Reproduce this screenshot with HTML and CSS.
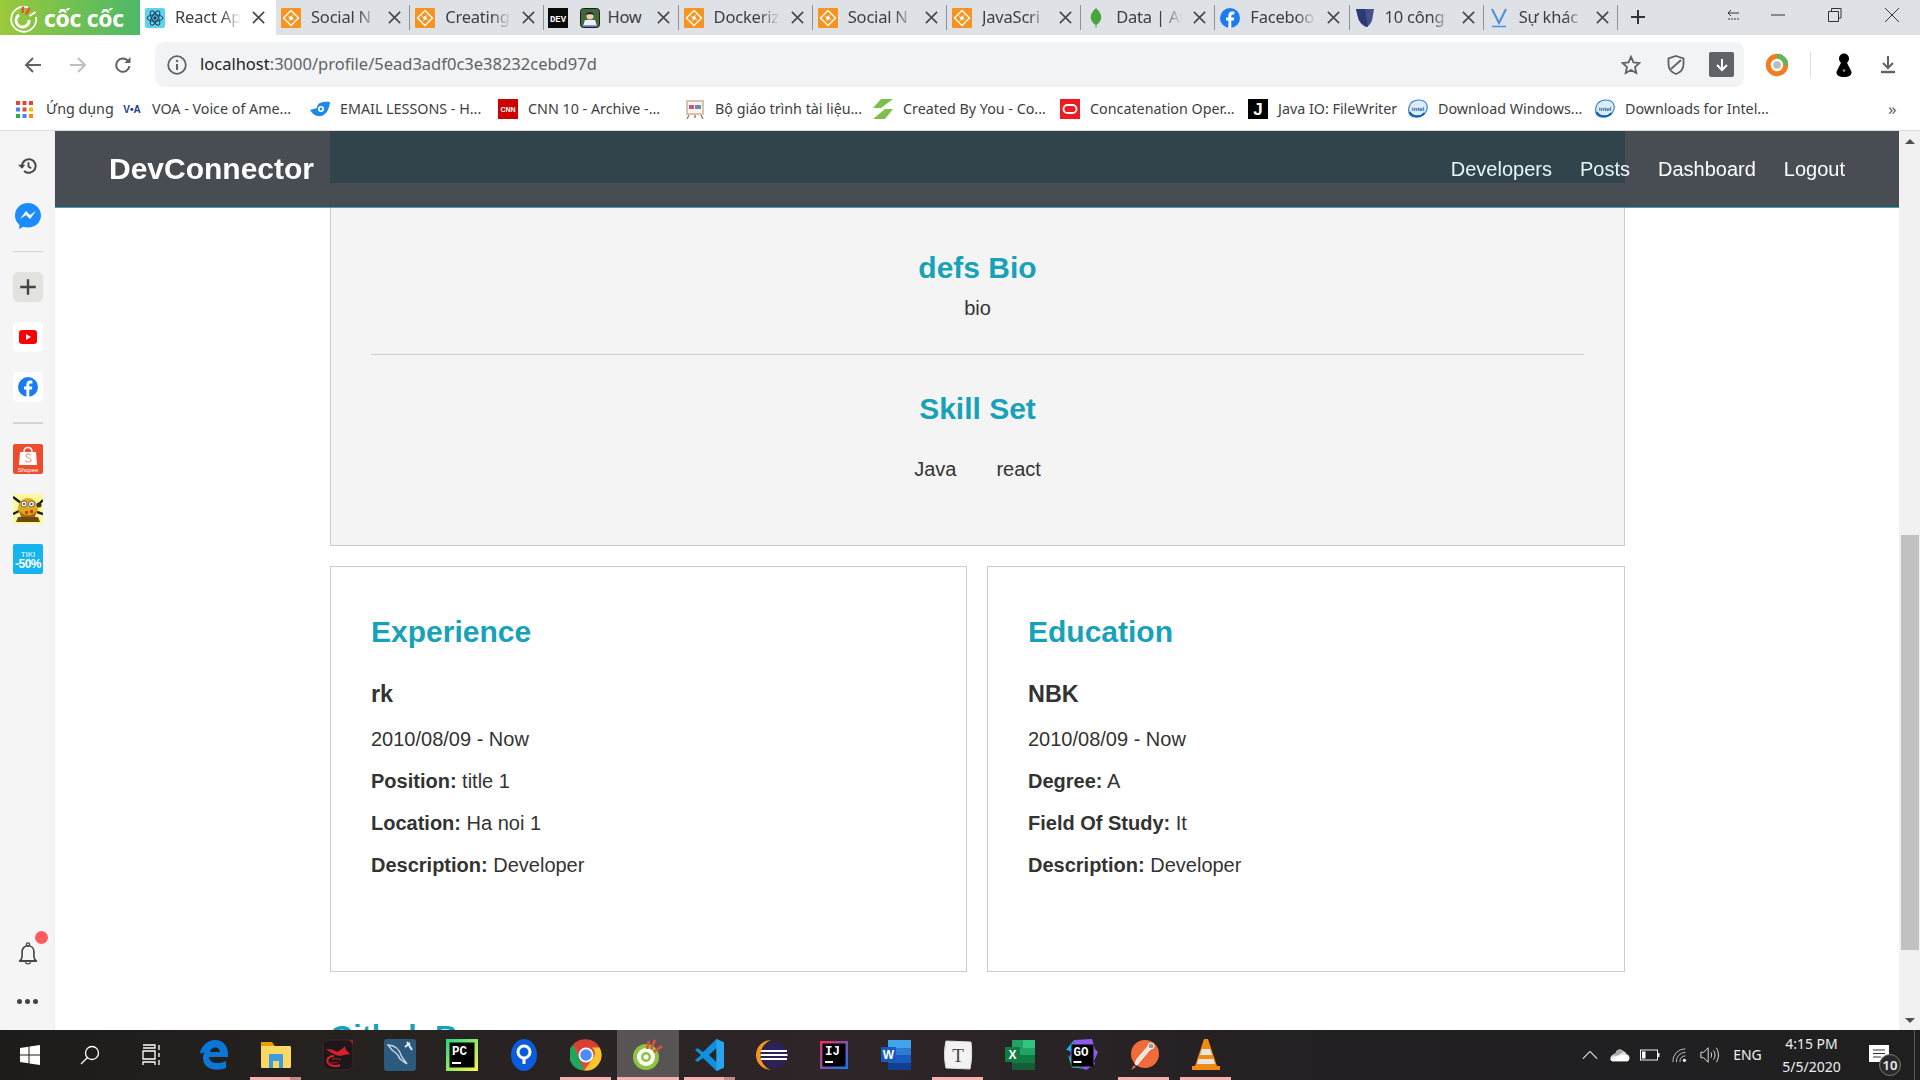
FILE: index.html
```html
<!DOCTYPE html>
<html lang="vi">
<head>
<meta charset="utf-8">
<title>React App</title>
<link rel="stylesheet" href="styles.css">
</head>
<body>
<svg class="defs" aria-hidden="true">
  <symbol id="orange" viewBox="0 0 20 20"><rect width="20" height="20" rx="1" fill="#f7931e"/><path d="M10 1.500 18.500 10 10 18.500 1.500 10Z" fill="#fff"/><path d="M10 3.500 13 6.500 8.500 9 6.500 7ZM16.500 10 13.500 13 11 8.500 13 6.500ZM10 16.500 7 13.500 11.500 11 13.500 13ZM3.500 10 6.500 7 9 11.500 7 13.500Z" fill="#f7931e"/><path d="M8.500 9 11 8.500 11.500 11 9 11.500Z" fill="#fff"/></symbol>
  <symbol id="react" viewBox="0 0 20 20"><rect width="20" height="20" rx="2" fill="#5fd3ee"/><g fill="none" stroke="#1c3b57" stroke-width="1"><ellipse cx="10" cy="10" rx="8" ry="3.200"/><ellipse cx="10" cy="10" rx="8" ry="3.200" transform="rotate(60 10 10)"/><ellipse cx="10" cy="10" rx="8" ry="3.200" transform="rotate(120 10 10)"/></g><circle cx="10" cy="10" r="1.700" fill="#1c3b57"/></symbol>
  <symbol id="close" viewBox="0 0 16 16"><path d="M2 2 14 14M14 2 2 14" stroke="#45484c" stroke-width="1.700" fill="none"/></symbol>
  <symbol id="fb" viewBox="0 0 20 20"><circle cx="10" cy="10" r="10" fill="#1a7cf2"/><path d="M11.300 20v-7.500h2.500l.5-3h-3V8c0-1 .4-1.600 1.700-1.600h1.400V3.800c-.6-.1-1.400-.2-2.200-.2-2.400 0-3.800 1.400-3.800 3.900v2H6v3h2.400V20Z" fill="#fff"/></symbol>
  <symbol id="intel" viewBox="0 0 20 20"><path d="M3 4C7 0 15 0 18 4c2.500 4 1 9-3 12-4 3-10 3-13 0C0 13 0 8 3 4Z" fill="#dcecf8" stroke="#3b86cc" stroke-width="1.200"/><path d="M1.500 13c3 5 11 6 15 1" fill="none" stroke="#0f5fa8" stroke-width="2"/><text x="10" y="11.500" class="fav-intel">intel</text></symbol>
</svg>

<div class="tabstrip">
  <div class="brand">
    <svg class="brand-mark" viewBox="0 0 30 30"><path d="M19 4.500A12.500 12.500 0 1 0 27 14" fill="none" stroke="#fff" stroke-width="1.800"/><path d="M10 12a6.500 6.500 0 1 0 10 5" fill="none" stroke="#fff" stroke-width="3"/><path d="M14 3.500 13.500 10" stroke="#e94f35" stroke-width="2.400"/><path d="M20.500 5 17 11.500" stroke="#e94f35" stroke-width="2.600"/><path d="M26.500 9 20.500 13" stroke="#fff" stroke-width="2"/></svg>
    <span class="brand-name">cốc cốc</span>
  </div>
  <div class="tab tab-active"><svg class="fav"><use href="#react"/></svg><span class="tab-title">React Ap</span><svg class="tab-x"><use href="#close"/></svg></div>
  <div class="tab"><svg class="fav"><use href="#orange"/></svg><span class="tab-title">Social N</span><svg class="tab-x"><use href="#close"/></svg></div>
  <div class="tab"><svg class="fav"><use href="#orange"/></svg><span class="tab-title">Creating</span><svg class="tab-x"><use href="#close"/></svg></div>
  <div class="tab tab-dev">
    <svg class="fav" viewBox="0 0 20 20"><rect width="20" height="20" fill="#0a0a0a"/><text x="10" y="14" class="fav-dev">DEV</text></svg>
    <svg class="fav fav-second" viewBox="0 0 20 20"><rect x=".5" y=".5" width="19" height="19" rx="3" fill="#3f6b3a" stroke="#1d1d1d"/><circle cx="10" cy="8" r="3.500" fill="#f0d0c0"/><path d="M6 7c0-4 8-4 8 0-2-1-6-1-8 0Z" fill="#222"/><path d="M3 18l2-6h10l2 6Z" fill="#eef2f6"/><path d="M3 18h14" stroke="#7a6fd0" stroke-width="1.500"/></svg>
    <span class="tab-title tab-title-short">How</span><svg class="tab-x"><use href="#close"/></svg>
  </div>
  <div class="tab"><svg class="fav"><use href="#orange"/></svg><span class="tab-title">Dockeriz</span><svg class="tab-x"><use href="#close"/></svg></div>
  <div class="tab"><svg class="fav"><use href="#orange"/></svg><span class="tab-title">Social N</span><svg class="tab-x"><use href="#close"/></svg></div>
  <div class="tab"><svg class="fav"><use href="#orange"/></svg><span class="tab-title">JavaScri</span><svg class="tab-x"><use href="#close"/></svg></div>
  <div class="tab"><svg class="fav" viewBox="0 0 20 20"><path d="M10 0c4 4 6 7 5 11-.6 3-3 5-4.500 6l-.2 3h-.6l-.2-3C8 16 5.600 14 5 11 4 7 6 4 10 0Z" fill="#4aa53f"/></svg><span class="tab-title">Data | At</span><svg class="tab-x"><use href="#close"/></svg></div>
  <div class="tab"><svg class="fav"><use href="#fb"/></svg><span class="tab-title">Faceboo</span><svg class="tab-x"><use href="#close"/></svg></div>
  <div class="tab"><svg class="fav" viewBox="0 0 20 20"><path d="M1 1h18l-1.500 9c-.8 5-3.500 8-6.500 9C7 17 4 14 3 9Z" fill="#46508a"/><path d="M1 1h9l3 18C8 17 4 14 3 9Z" fill="#2e3a75"/></svg><span class="tab-title">10 công</span><svg class="tab-x"><use href="#close"/></svg></div>
  <div class="tab"><svg class="fav" viewBox="0 0 20 20"><path d="M3 1 10 15 17 1" fill="none" stroke="#4a90e2" stroke-width="2"/><path d="M3 18.500h14" stroke="#4a90e2" stroke-width="1.500"/></svg><span class="tab-title">Sự khác</span><svg class="tab-x"><use href="#close"/></svg></div>
  <div class="newtab"><svg class="newtab-ico" viewBox="0 0 16 16"><path d="M8 1v14M1 8h14" stroke="#333" stroke-width="2"/></svg></div>
  <div class="win-controls">
    <div class="win-btn win-sync"><svg class="win-ico" viewBox="0 0 14 14"><path d="M1 5h11M1 5l3-3M1 5l3 3" stroke="#333" fill="none"/><path d="M1 11h12" stroke="#333" stroke-dasharray="2 1"/></svg></div>
    <div class="win-btn"><svg class="win-ico" viewBox="0 0 14 14"><path d="M0 7h14" stroke="#333"/></svg></div>
    <div class="win-btn"><svg class="win-ico" viewBox="0 0 14 14"><path d="M3.500 3V.5h9.500v9.500h-2.500M.5 3.500h10v10H.5Z" stroke="#333" fill="none"/></svg></div>
    <div class="win-btn win-close"><svg class="win-ico" viewBox="0 0 14 14"><path d="M0 0 14 14M14 0 0 14" stroke="#333" fill="none"/></svg></div>
  </div>
</div>

<div class="toolbar">
  <div class="tool"><svg class="tool-ico" viewBox="0 0 18 18"><path d="M17 9H3M9 2 2 9l7 7" fill="none" stroke="#5f6368" stroke-width="2"/></svg></div>
  <div class="tool"><svg class="tool-ico" viewBox="0 0 18 18"><path d="M1 9h14M9 2l7 7-7 7" fill="none" stroke="#bcbfc4" stroke-width="2"/></svg></div>
  <div class="tool"><svg class="tool-ico" viewBox="0 0 18 18"><path d="M15.500 10a6.700 6.700 0 1 1-1.800-5.500" fill="none" stroke="#5f6368" stroke-width="2"/><path d="M16.500 1v6h-6Z" fill="#5f6368"/></svg></div>
  <div class="omnibox">
    <svg class="omni-info" viewBox="0 0 20 20"><circle cx="10" cy="10" r="8.800" fill="none" stroke="#5f6368" stroke-width="1.800"/><path d="M10 9v6" stroke="#5f6368" stroke-width="2"/><circle cx="10" cy="6" r="1.200" fill="#5f6368"/></svg>
    <div class="url"><span class="url-host">localhost</span>:3000/profile/5ead3adf0c3e38232cebd97d</div>
    <svg class="omni-ico" viewBox="0 0 20 20"><path d="M10 1.800 12.500 7.400l6 .6-4.500 4 1.300 6L10 15l-5.300 3 1.300-6-4.500-4 6-.6Z" fill="none" stroke="#5f6368" stroke-width="1.800"/></svg>
    <svg class="omni-ico omni-ico-last" viewBox="0 0 20 20"><path d="M10 1 17.500 3.500V9c0 5-3.500 8.500-7.500 10C6 17.500 2.500 14 2.500 9V3.500Z" fill="none" stroke="#5f6368" stroke-width="1.800"/><path d="M5 14 15 5" stroke="#5f6368" stroke-width="1.800"/></svg>
    <div class="omni-dl"><svg class="omni-dl-ico" viewBox="0 0 14 14"><path d="M7 1v11M2 7l5 5 5-5" fill="none" stroke="#fff" stroke-width="2"/></svg></div>
  </div>
  <div class="tool tool-ext"><svg class="tool-ico tool-ico-lg" viewBox="0 0 22 22"><circle cx="11" cy="11" r="8" fill="none" stroke="#f47c20" stroke-width="4.500"/><path d="M11 3a8 8 0 0 1 8 8" fill="none" stroke="#5cb85c" stroke-width="4.500"/><circle cx="11" cy="11" r="3.500" fill="#bbb"/></svg></div>
  <div class="tool-sep"></div>
  <div class="tool"><svg class="tool-ico tool-ico-lg" viewBox="0 0 22 26"><circle cx="11" cy="6" r="5.500" fill="#000"/><path d="M8 10h6l5 10c1 4-3 6-8 6s-9-2-8-6Z" fill="#000"/><circle cx="11" cy="19" r="1.500" fill="#888"/></svg></div>
  <div class="tool tool-last"><svg class="tool-ico" viewBox="0 0 18 18"><path d="M9 0v11M4 7l5 5 5-5" fill="none" stroke="#5f6368" stroke-width="2"/><path d="M2 16h14" stroke="#5f6368" stroke-width="2.400"/></svg></div>
</div>

<div class="bookmarks">
  <div class="bm"><svg class="bm-apps" viewBox="0 0 17 17"><g fill="#ea4335"><rect width="4" height="4"/><rect x="6.500" width="4" height="4"/><rect x="13" width="4" height="4"/></g><g><rect y="6.500" width="4" height="4" fill="#4285f4"/><rect x="6.500" y="6.500" width="4" height="4" fill="#ea4335"/><rect x="13" y="6.500" width="4" height="4" fill="#fbbc05"/><rect y="13" width="4" height="4" fill="#34a853"/><rect x="6.500" y="13" width="4" height="4" fill="#4285f4"/><rect x="13" y="13" width="4" height="4" fill="#fb8c00"/></g></svg><span class="bm-text">Ứng dụng</span></div>
  <div class="bm"><svg class="fav" viewBox="0 0 20 20"><text x="10" y="13.500" class="fav-voa">V•A</text></svg><span class="bm-text">VOA - Voice of Ame...</span></div>
  <div class="bm"><svg class="fav" viewBox="0 0 20 20"><path d="M0 11 7 9C7 4 12 2 20 3c-1 10-6 15-12 14-3 0-6-3-8-6Z" fill="#1e88e5"/><circle cx="11" cy="10" r="3" fill="#fff"/><circle cx="11" cy="10" r="1.400" fill="#1e88e5"/></svg><span class="bm-text">EMAIL LESSONS - H...</span></div>
  <div class="bm"><svg class="fav" viewBox="0 0 20 20"><rect width="20" height="20" fill="#cc0000"/><text x="10" y="13" class="fav-cnn">CNN</text></svg><span class="bm-text">CNN 10 - Archive -...</span></div>
  <div class="bm"><svg class="fav" viewBox="0 0 20 20"><path d="M4 16 2 20M16 16l2 4M10 16v3" stroke="#a9825f" stroke-width="1.500"/><rect x="1" y="1" width="18" height="15" fill="#d8c4ac"/><rect x="3" y="3" width="14" height="11" fill="#f5f5f5"/><path d="M4 6h5v4H4Z" fill="#c9566a"/><path d="M10 6h6v4h-6Z" fill="#6f87b8"/></svg><span class="bm-text">Bộ giáo trình tài liệu...</span></div>
  <div class="bm"><svg class="fav" viewBox="0 0 20 20"><path d="M8 0h12L8 9H0ZM12 10h8L12 20H0Z" fill="#7cc04b"/></svg><span class="bm-text">Created By You - Co...</span></div>
  <div class="bm"><svg class="fav" viewBox="0 0 20 20"><rect width="20" height="20" fill="#ed1c24"/><rect x="3.500" y="6" width="13" height="8" rx="4" fill="none" stroke="#fff" stroke-width="1.800"/></svg><span class="bm-text">Concatenation Oper...</span></div>
  <div class="bm"><svg class="fav" viewBox="0 0 20 20"><rect width="20" height="20" fill="#000"/><text x="10" y="16" class="fav-j">J</text></svg><span class="bm-text">Java IO: FileWriter</span></div>
  <div class="bm"><svg class="fav"><use href="#intel"/></svg><span class="bm-text">Download Windows...</span></div>
  <div class="bm"><svg class="fav"><use href="#intel"/></svg><span class="bm-text">Downloads for Intel...</span></div>
  <div class="bm-more">»</div>
</div>

<div class="workspace">
  <aside class="sidebar">
    <div class="side-item"><svg class="side-ico" viewBox="0 0 22 22"><path d="M4.500 11a7.500 7.500 0 1 1 2.300 5.400" fill="none" stroke="#444" stroke-width="2.200"/><path d="M0 9.500h8L4.500 14Z" fill="#444"/><path d="M11.500 7v4.500l3 2" fill="none" stroke="#444" stroke-width="2"/></svg></div>
    <div class="side-item"><svg class="side-full" viewBox="0 0 30 30"><path d="M15 2C7.500 2 2 7.500 2 14.500c0 3.800 1.600 7 4.300 9.200V28l4-2.200c1.500.4 3 .7 4.700.7 7.500 0 13-5.500 13-12S22.500 2 15 2Z" fill="#1a8cff"/><path d="M7 18l6-8 4 4 6-4-6 8-4-4Z" fill="#fff"/></svg></div>
    <div class="side-rule"></div>
    <div class="side-item side-add"><svg class="side-ico" viewBox="0 0 18 18"><path d="M9 2v14M2 9h14" stroke="#444" stroke-width="2.200"/></svg></div>
    <div class="side-item side-tile"><svg class="side-yt" viewBox="0 0 18 14"><rect width="18" height="14" rx="3" fill="#f00"/><path d="M7 4v6l5-3Z" fill="#fff"/></svg></div>
    <div class="side-item side-tile"><svg class="side-ico"><use href="#fb"/></svg></div>
    <div class="side-rule side-rule-thick"></div>
    <div class="side-item"><svg class="side-full" viewBox="0 0 30 30"><rect width="30" height="30" rx="2" fill="#ee4d2d"/><path d="M7 8h16l1 13H6Z" fill="#fff"/><path d="M11 8c0-6 8-6 8 0" fill="none" stroke="#fff" stroke-width="1.500"/><path d="M18 11c-2-2-5-1-5 1s5 1.500 5 4-4 2.500-6 .5" fill="none" stroke="#f4a08e" stroke-width="1.300"/><text x="15" y="27.500" class="tile-shopee">Shopee</text></svg></div>
    <div class="side-item"><svg class="side-full" viewBox="0 0 30 30"><rect width="30" height="30" fill="#fdf7a0"/><path d="M0 3 8 9M30 6l-6 6M0 20l6-3M30 20l-6-2" stroke="#222" stroke-width="2.400"/><ellipse cx="15" cy="14" rx="10" ry="10" fill="#e0a816"/><path d="M6 16c4 7 14 7 18 0l-2 7H8Z" fill="#a56a10"/><circle cx="11" cy="10" r="3" fill="#eee" stroke="#555" stroke-width=".8"/><circle cx="18.500" cy="10" r="3" fill="#eee" stroke="#555" stroke-width=".8"/><circle cx="11" cy="10" r="1" fill="#333"/><circle cx="18.500" cy="10" r="1" fill="#333"/><path d="M3 28l2-5h20l2 5Z" fill="#6d4a12"/><path d="M12 17h3v3h-3ZM17 16h3v3h-3Z" fill="#c43a2b"/><circle cx="26" cy="11" r="2.500" fill="#333"/></svg></div>
    <div class="side-item"><svg class="side-full" viewBox="0 0 30 30"><rect width="30" height="30" rx="2" fill="#14b4ee"/><text x="15" y="12.500" class="tile-tiki">TIKI</text><text x="15" y="24" class="tile-off">-50%</text></svg></div>
    <div class="side-bottom">
      <div class="side-item side-bell"><svg class="side-ico" viewBox="0 0 22 26"><path d="M2 21c2-1 2.500-3 2.500-6V11c0-4 3-6.500 6.500-6.500S17.500 7 17.500 11v4c0 3 .5 5 2.500 6Z" fill="none" stroke="#444" stroke-width="1.800"/><circle cx="11" cy="3" r="1.800" fill="none" stroke="#444" stroke-width="1.400"/><path d="M8 22.500c1 2.500 5 2.500 6 0" fill="none" stroke="#444" stroke-width="1.500"/><path d="M1 21.300h20" stroke="#444" stroke-width="1.800"/></svg><span class="bell-dot"></span></div>
      <div class="side-item side-dots"><span class="dot"></span><span class="dot"></span><span class="dot"></span></div>
    </div>
  </aside>

  <main class="page">
    <nav class="navbar">
      <a class="logo">DevConnector</a>
      <ul class="nav-links">
        <li class="nav-item">Developers</li>
        <li class="nav-item">Posts</li>
        <li class="nav-item">Dashboard</li>
        <li class="nav-item">Logout</li>
      </ul>
    </nav>
    <div class="profile-grid">
      <div class="profile-top"></div>
      <section class="profile-about">
        <h2 class="text-primary">defs Bio</h2>
        <p class="about-text">bio</p>
        <div class="line"></div>
        <h2 class="text-primary">Skill Set</h2>
        <div class="skills">
          <div class="skill">Java</div>
          <div class="skill">react</div>
        </div>
      </section>
      <section class="profile-card">
        <h2 class="text-primary card-title">Experience</h2>
        <div class="entry">
          <h3 class="entry-name">rk</h3>
          <p class="entry-line">2010/08/09 - Now</p>
          <p class="entry-line"><strong>Position:</strong> title 1</p>
          <p class="entry-line"><strong>Location:</strong> Ha noi 1</p>
          <p class="entry-line"><strong>Description:</strong> Developer</p>
        </div>
      </section>
      <section class="profile-card">
        <h2 class="text-primary card-title">Education</h2>
        <div class="entry">
          <h3 class="entry-name">NBK</h3>
          <p class="entry-line">2010/08/09 - Now</p>
          <p class="entry-line"><strong>Degree:</strong> A</p>
          <p class="entry-line"><strong>Field Of Study:</strong> It</p>
          <p class="entry-line"><strong>Description:</strong> Developer</p>
        </div>
      </section>
      <section class="profile-github">
        <h2 class="text-primary github-title">Github Repos</h2>
      </section>
    </div>
  </main>

  <div class="scrollbar">
    <div class="sb-btn"><span class="sb-up"></span></div>
    <div class="sb-track"><div class="sb-thumb"></div></div>
    <div class="sb-btn"><span class="sb-down"></span></div>
  </div>
</div>

<footer class="taskbar">
  <div class="task-fixed">
    <div class="task"><svg class="task-sys" viewBox="0 0 20 20"><path d="M0 3 8.500 1.800V9.500H0ZM9.500 1.600 20 0V9.500H9.500ZM0 10.500H8.500V18.200L0 17ZM9.500 10.500H20V20L9.500 18.400Z" fill="#fff"/></svg></div>
    <div class="task"><svg class="task-sys" viewBox="0 0 20 20"><circle cx="12" cy="8" r="6.500" fill="none" stroke="#fff" stroke-width="1.300"/><path d="M7.500 12.500 1 19" stroke="#fff" stroke-width="1.300"/></svg></div>
    <div class="task"><svg class="task-sys" viewBox="0 0 20 20"><path d="M1 0h12v3H1M1 6h12v8H1ZM1 20v-3h12v3M17 0v5M17 8v4M17 15v5" fill="none" stroke="#fff" stroke-width="1.300"/></svg></div>
  </div>
  <div class="task-apps">
    <div class="task"><svg class="task-ico" viewBox="0 0 32 32"><path d="M2 14C4 5 11 1 17 1c8 0 13 6 13 14v3H11c0 6 9 8 17 4v7c-10 4-22 1-23-9-.3-3 .5-5 2-7-2 1-4 2-5 1Zm10-1h10c0-6-9-6-10 0Z" fill="#0b78d7"/></svg></div>
    <div class="task task-run task-stack"><svg class="task-ico" viewBox="0 0 32 32"><path d="M1 3h11l3 4h0V9H1Z" fill="#e0a000"/><rect x="1" y="7" width="30" height="22" rx="1" fill="#fbd862"/><path d="M9 15h14v14h-4v-7h-6v7H9Z" fill="#3d9be0"/></svg></div>
    <div class="task"><svg class="task-ico" viewBox="0 0 32 32"><rect x="1" y="1" width="30" height="30" rx="6" fill="#1d1719" stroke="#3a2a2c"/><path d="M27 1 31 5V1Z" fill="#a8151f"/><path d="M4 10c5 0 8 1 11 3l5-3 3-3 1 4 4 4-6 1-4 1c-3 0-9-3-14-7Z" fill="#d81f2c"/><path d="M12 17c-5 0-8 3-6 7 2 3 8 4 12 2" fill="none" stroke="#d81f2c" stroke-width="2"/><path d="M10 20c3-1 7 0 9 1M8 24c3 0 6 0 8-1" fill="none" stroke="#9f1720" stroke-width="1.300"/></svg></div>
    <div class="task"><svg class="task-ico" viewBox="0 0 32 32"><rect width="32" height="32" rx="3" fill="#2c5a7e"/><path d="M4 6c8 0 12 6 14 12l5 7c-5-3-5-4-7-5-2-6-6-7-8-9Z" fill="none" stroke="#c7d6e2" stroke-width="1.400"/><path d="M23 3 28 11M26 4l-5 4" stroke="#e6eef3" stroke-width="2"/></svg></div>
    <div class="task"><svg class="task-ico" viewBox="0 0 32 32"><defs><linearGradient id="pc" x1="0" y1="0" x2="1" y2="1"><stop offset="0" stop-color="#21d789"/><stop offset="1" stop-color="#fcf84a"/></linearGradient></defs><rect width="32" height="32" fill="url(#pc)"/><rect x="3.500" y="3.500" width="25" height="25" fill="#000"/><text x="6" y="16" class="tile-code">PC</text><rect x="6" y="23" width="9" height="2" fill="#fff"/></svg></div>
    <div class="task"><svg class="task-ico" viewBox="0 0 32 32"><ellipse cx="16" cy="16" rx="13" ry="16" fill="#0a5cdc"/><circle cx="16" cy="13" r="6" fill="none" stroke="#fff" stroke-width="3"/><path d="M16 19v6" stroke="#fff" stroke-width="3"/></svg></div>
    <div class="task task-run"><svg class="task-ico" viewBox="0 0 32 32"><circle cx="16" cy="16" r="15.500" fill="#dd4b3e"/><path d="M16 .5a15.500 15.500 0 0 1 13.500 8H16a7.500 7.500 0 0 0-6.500 3.700L3 5.500A15.500 15.500 0 0 1 16 .5Z" fill="#d93f33"/><path d="M29.500 8.500A15.500 15.500 0 0 1 14 31.400L22.500 20a7.500 7.500 0 0 0-.5-11.500Z" fill="#f8c52c"/><path d="M3 5.500 9.500 20 14 31.400A15.500 15.500 0 0 1 3 5.500Z" fill="#1fa65a"/><circle cx="16" cy="16" r="7.500" fill="#fff"/><circle cx="16" cy="16" r="5.800" fill="#4d8cf5"/></svg></div>
    <div class="task task-active task-run"><svg class="task-ico" viewBox="0 0 32 32"><circle cx="14" cy="18" r="13" fill="#8cc63f"/><circle cx="14" cy="18" r="9" fill="#fff"/><circle cx="14" cy="18" r="5" fill="#8cc63f"/><circle cx="14" cy="18" r="2.500" fill="#fff"/><path d="M17 2 15 10M23 1l-4 9M30 7l-8 6" stroke="#e94f35" stroke-width="2.500"/></svg></div>
    <div class="task task-run task-stack"><svg class="task-ico" viewBox="0 0 32 32"><path d="M22.500 0 30 3.500v25L22.500 32 9 19l-5.500 4L1 21l6-5-6-5 2.500-2L9 13Zm0 9L15 16l7.500 7Z" fill="#0f8fdc"/><path d="M22.500 0 30 3.500v25L22.500 32Z" fill="#27a5ee"/></svg></div>
    <div class="task"><svg class="task-ico" viewBox="0 0 32 32"><path d="M15 1A15 15 0 0 0 15 31 16 16 0 0 1 15 1Z" fill="#f7941e"/><circle cx="18" cy="16" r="13.500" fill="#2c2255"/><path d="M5 11h26v2H5ZM4.500 15h27v2h-27ZM5 19h26v2H5Z" fill="#fff"/></svg></div>
    <div class="task"><svg class="task-ico" viewBox="0 0 32 32"><defs><linearGradient id="ij" x1="0" y1="0" x2="1" y2="1"><stop offset="0" stop-color="#fe2857"/><stop offset="1" stop-color="#087cfa"/></linearGradient></defs><rect x="2" y="2" width="28" height="28" fill="url(#ij)"/><rect x="4.500" y="4.500" width="23" height="23" fill="#000"/><text x="7" y="16" class="tile-code">IJ</text><rect x="7" y="22" width="8" height="2" fill="#fff"/></svg></div>
    <div class="task"><svg class="task-ico" viewBox="0 0 32 32"><rect x="8" y="1" width="23" height="30" rx="1" fill="#2b7cd3"/><rect x="8" y="1" width="23" height="8" fill="#41a5ee"/><rect x="8" y="16" width="23" height="8" fill="#185abd"/><rect x="8" y="24" width="23" height="7" fill="#103f91"/><rect x="1" y="8" width="15" height="15" rx="1" fill="#185abd"/><text x="8.500" y="20" class="tile-letter">W</text></svg></div>
    <div class="task task-run"><svg class="task-ico" viewBox="0 0 32 32"><path d="M4 2 29 3c1 9 1 18-1 27L4 29C2 20 2 11 4 2Z" fill="#f2f2f2" stroke="#ddd"/><text x="16" y="23" class="tile-typora">T</text></svg></div>
    <div class="task"><svg class="task-ico" viewBox="0 0 32 32"><rect x="8" y="1" width="23" height="30" rx="1" fill="#21a366"/><rect x="19" y="1" width="12" height="8" fill="#33c481"/><rect x="8" y="16" width="23" height="8" fill="#107c41"/><rect x="8" y="24" width="23" height="7" fill="#185c37"/><rect x="1" y="8" width="15" height="15" rx="1" fill="#107c41"/><text x="8.500" y="20" class="tile-letter">X</text></svg></div>
    <div class="task"><svg class="task-ico" viewBox="0 0 32 32"><path d="M8 1 26 0l3 10 3 3-4 9 1 3-9 6-6-3-8 1-3-10 2-5-3-4 5-3Z" fill="#8a5cf0"/><path d="M2 16 6 28l12 2-8-3Z" fill="#1fd68a"/><path d="M0 11 8 1 6 12Z" fill="#18b0ea"/><rect x="5.500" y="5.500" width="22" height="22" fill="#000"/><text x="7.500" y="17" class="tile-code">GO</text><rect x="7.500" y="22" width="8" height="2" fill="#fff"/></svg></div>
    <div class="task task-run"><svg class="task-ico" viewBox="0 0 32 32"><circle cx="17" cy="15" r="14" fill="#f26b3a"/><path d="M25 7 9 26l-2-1 2-5L22 5Z" fill="#e8e3df" stroke="#fff"/><circle cx="23" cy="7" r="3" fill="#999" stroke="#fff"/><path d="M6 26 3 31l5-3Z" fill="#f26b3a"/></svg></div>
    <div class="task task-run"><svg class="task-ico" viewBox="0 0 32 32"><path d="M14 0h4l9 27h3v4H2v-4h3Z" fill="#f08a12"/><path d="M12 10h8l2 6H10ZM8.500 20h15l1.500 5H7Z" fill="#e6e6e6"/></svg></div>
  </div>
  <div class="tray">
    <div class="tray-item"><svg class="tray-ico" viewBox="0 0 18 18"><path d="M1 13 9 5l8 8" fill="none" stroke="#eee" stroke-width="1.200"/></svg></div>
    <div class="tray-item"><svg class="tray-ico tray-ico-lg" viewBox="0 0 22 16"><path d="M6 6a5 5 0 0 1 9-2 4 4 0 0 1 3 3c2 .5 3.500 2 3.500 4.500 0 2-1.500 3.500-3 3.500H4c-2 0-3.500-1.500-3.500-3.500S2.500 7 6 6Z" fill="#ddd"/><path d="M9 9c2-2 5-2 6-1 3 0 6 1 6 3.500 0 2-1.500 3.500-3 3.500H4c-2 0-3.500-1-3.500-3Z" fill="#fff"/><path d="M6 6a5 5 0 0 1 9-2L10 8 3 9Z" fill="#aaa"/></svg></div>
    <div class="tray-item"><svg class="tray-ico tray-ico-lg" viewBox="0 0 20 12"><rect x=".5" y="1" width="17" height="10" fill="none" stroke="#eee"/><rect x="2" y="2.500" width="3.500" height="7" fill="#fff"/><rect x="18" y="4" width="1.500" height="4" fill="#eee"/></svg></div>
    <div class="tray-item"><svg class="tray-ico" viewBox="0 0 18 18"><path d="M1 17A14 14 0 0 1 15 2M5 17A10 10 0 0 1 15 6M9 17a6 6 0 0 1 6-7" fill="none" stroke="#ccc" stroke-width="1"/><circle cx="14" cy="15" r="1.800" fill="#fff"/></svg></div>
    <div class="tray-item"><svg class="tray-ico tray-ico-lg" viewBox="0 0 22 18"><path d="M1 6h3l5-5v16l-5-5H1Z" fill="none" stroke="#eee"/><path d="M12 6c1 2 1 4 0 6M15 4c2 3 2 7 0 10M18 1c3 5 3 11 0 16" fill="none" stroke="#eee"/></svg></div>
    <div class="tray-lang">ENG</div>
    <div class="tray-clock"><div class="clock-line">4:15 PM</div><div class="clock-line">5/5/2020</div></div>
    <div class="tray-notif"><svg class="notif-ico" viewBox="0 0 20 18"><path d="M0 0h20v17H0Z" fill="#fff"/><path d="M4 5h12M4 8.500h12M4 12h8" stroke="#333"/></svg><span class="notif-badge">10</span></div>
    <div class="tray-show"></div>
  </div>
</footer>
</body>
</html>
```

FILE: styles.css
```css
* { box-sizing: border-box; }
html, body { height: 100%; }
body {
  margin: 0;
  width: 1920px;
  height: 1080px;
  overflow: hidden;
  display: flex;
  flex-direction: column;
  font-family: "Liberation Sans", Arial, sans-serif;
  font-size: 20px;
  line-height: 1.6;
  color: #333;
  background: #fff;
}
.defs { display: none; }

/* tab strip */
.tabstrip {
  flex: 0 0 35px;
  display: flex;
  background: #dee1e6;
  font-family: "Noto Sans", sans-serif;
  font-size: 16.5px;
  color: #3c4043;
  line-height: 20px;
}
.brand {
  width: 140px;
  display: flex;
  align-items: center;
  gap: 5px;
  padding-left: 9px;
  background: linear-gradient(90deg, #9bc93a, #4cb868);
}
.brand-mark { width: 30px; height: 30px; flex: none; }
.brand-name { color: #fff; font-family: "Open Sans", sans-serif; font-size: 23px; font-weight: 700; white-space: nowrap; letter-spacing: -0.3px; }
.tab {
  width: 134.2px;
  height: 25px;
  margin-top: 5px;
  padding-left: 5px;
  display: flex;
  align-items: center;
  border-right: 1px solid #8e9297;
}
.tab-active {
  width: 136px;
  height: 35px;
  margin-top: 0;
  background: #fff;
  border-right: 0;
}
.fav { width: 20px; height: 20px; flex: none; display: block; }
.fav-second { margin-left: 12px; }
.tab-dev { padding-left: 4px; }
.tab-title {
  width: 66px;
  margin-left: 10px;
  margin-top: -2px;
  overflow: hidden;
  white-space: nowrap;
  letter-spacing: -0.2px;
  -webkit-mask-image: linear-gradient(90deg, #000 70%, transparent 100%);
  mask-image: linear-gradient(90deg, #000 70%, transparent 100%);
}
.tab-title-short { width: 36px; margin-left: 7px; -webkit-mask-image: none; mask-image: none; }
.tab-x { width: 15px; height: 15px; flex: none; margin-left: 10px; }
.tab-title-short + .tab-x { margin-left: 13px; }
.newtab { width: 40px; display: flex; align-items: center; justify-content: center; }
.newtab-ico { width: 16px; height: 16px; margin-top: -1px; }
.win-controls { margin-left: auto; display: flex; }
.win-btn { width: 57px; display: flex; align-items: center; justify-content: center; padding-bottom: 5px; }
.win-sync { width: 30px; }
.win-ico { width: 14px; height: 14px; }
.fav-dev { font: 700 9px "Liberation Mono", monospace; fill: #fff; text-anchor: middle; }
.fav-voa { font: 700 10px "Liberation Sans", sans-serif; fill: #1f3a93; text-anchor: middle; }
.fav-cnn { font: 700 7px "Liberation Sans", sans-serif; fill: #fff; text-anchor: middle; }
.fav-j { font: 700 17px "Liberation Sans", sans-serif; fill: #fff; text-anchor: middle; }
.fav-intel { font: 700 6px "Liberation Sans", sans-serif; fill: #1763ad; text-anchor: middle; }

/* toolbar */
.toolbar {
  flex: 0 0 57px;
  display: flex;
  padding: 7px 0 5px 10px;
  background: #fff;
}
.tool { width: 45px; display: flex; align-items: center; justify-content: center; flex: none; }
.tool-ico { width: 18px; height: 18px; }
.tool-ico-lg { width: 24px; height: 24px; }
.omnibox {
  width: 1589px;
  margin-left: 10px;
  display: flex;
  align-items: center;
  border-radius: 9px;
  background: #f1f3f4;
  padding-right: 10px;
}
.omni-info { width: 20px; height: 20px; margin-left: 12px; flex: none; }
.url {
  margin-left: 13px;
  font-family: "Noto Sans", sans-serif;
  font-size: 16.5px;
  color: #5f6368;
  white-space: nowrap;
  flex: 1;
}
.url-host { color: #202124; }
.omni-ico { width: 20px; height: 20px; flex: none; margin-right: 25px; }
.omni-ico-last { margin-right: 23px; }
.omni-dl { width: 25px; height: 25px; background: #5f6368; border-radius: 2px; display: flex; align-items: center; justify-content: center; flex: none; }
.omni-dl-ico { width: 14px; height: 14px; }
.tool-ext { margin-left: 10px; }
.tool-sep { width: 22px; flex: none; position: relative; display: flex; justify-content: center; align-items: center; }
.tool-sep::before { content: ""; width: 1px; height: 25px; background: #dadce0; }
.tool-last { width: 44px; }

/* bookmarks */
.bookmarks {
  flex: 0 0 39px;
  display: grid;
  grid-template-columns: 106px 188px 188px 187px 188px 187px 188px 160px 187px 293px auto;
  padding-left: 16px;
  padding-bottom: 4px;
  align-items: center;
  background: #fff;
  border-bottom: 1px solid #dadce0;
  font-family: "Noto Sans", sans-serif;
  font-size: 14.3px;
  line-height: 20px;
  color: #3c4043;
}
.bm { display: flex; align-items: center; gap: 10px; white-space: nowrap; overflow: hidden; }
.bm-apps { width: 17px; height: 17px; flex: none; margin-right: 3px; }
.bm-text { display: block; }
.bm-more { font-size: 17px; color: #5f6368; }

/* workspace */
.workspace { flex: 1; display: flex; min-height: 0; }
.sidebar {
  width: 55px;
  flex: none;
  display: flex;
  flex-direction: column;
  align-items: center;
  gap: 20px;
  padding: 20px 0 14px;
  background: #f5f5f5;
  box-shadow: inset -3px 0 3px -3px #e4e4e4;
}
.side-item { width: 30px; height: 30px; display: flex; align-items: center; justify-content: center; flex: none; position: relative; border-radius: 5px; }
.side-ico { width: 20px; height: 20px; display: block; }
.side-full { width: 30px; height: 30px; display: block; }
.side-yt { width: 18px; height: 14px; display: block; }
.side-add { background: #e2e2df; }
.side-tile { background: #fff; }
.side-rule { width: 30px; height: 1px; background: #d5d5d5; flex: none; }
.side-rule-thick { height: 2px; }
.side-bottom { margin-top: auto; display: flex; flex-direction: column; gap: 18px; }
.side-bell .side-ico { width: 20px; height: 25px; }
.bell-dot { position: absolute; top: -7px; right: -5px; width: 13px; height: 13px; border-radius: 50%; background: #ff5a5f; }
.side-dots { gap: 3px; }
.dot { width: 5px; height: 5px; border-radius: 50%; background: #444; }
.tile-shopee { font: 400 6px "Liberation Sans", sans-serif; fill: #fff; text-anchor: middle; }
.tile-tiki { font: 400 8px "Liberation Sans", sans-serif; fill: #fff; text-anchor: middle; }
.tile-off { font: 700 12px "Liberation Sans", sans-serif; fill: #fff; text-anchor: middle; letter-spacing: -0.5px; }

/* page */
.page { flex: 1; min-width: 0; position: relative; overflow: hidden; background: #fff; }
.navbar {
  position: absolute;
  top: 0;
  left: 0;
  right: 0;
  z-index: 2;
  height: 77px;
  display: flex;
  align-items: center;
  justify-content: space-between;
  padding: 0 40px;
  background: #343a40;
  border-bottom: 1px solid #17a2b8;
  opacity: 0.9;
  color: #fff;
}
.logo { padding: 0 14px; font-size: 30px; font-weight: 700; line-height: 48px; }
.nav-links { display: flex; margin: 0; padding: 0; list-style: none; }
.nav-item { padding: 0 14px; }
.profile-grid {
  width: 1295px;
  margin-left: 275px;
  display: grid;
  grid-template-columns: 637px 638px;
  gap: 20px;
}
.profile-top, .profile-about, .profile-github { grid-column: 1 / 3; }
.profile-top { height: 52px; background: #17a2b8; }
.profile-about {
  padding: 40px;
  background: #f4f4f4;
  border: 1px solid #ccc;
  text-align: center;
}
h2.text-primary { margin: 0; font-size: 30px; line-height: 48px; color: #17a2b8; font-weight: 700; }
.about-text { margin: 0; }
.line { height: 1px; margin: 30px 0; background: #ccc; }
.skills { display: flex; justify-content: center; }
.skill { padding: 20px; }
.profile-card { padding: 41px 40px 40px; border: 1px solid #ccc; background: #fff; }
h2.card-title { margin-bottom: 20px; }
.entry { margin-bottom: 20px; padding-bottom: 20px; }
.entry-name { margin: 0; font-size: 23.4px; line-height: 1.6; font-weight: 700; color: #333; }
.entry-line { margin: 10px 0; }
.profile-github { padding-top: 20px; }

/* scrollbar */
.scrollbar { width: 21px; flex: none; display: flex; flex-direction: column; background: #f1f1f1; }
.sb-btn { height: 20px; flex: none; display: flex; align-items: center; justify-content: center; }
.sb-up { border: 5px solid transparent; border-top: 0; border-bottom: 5px solid #505050; }
.sb-down { border: 5px solid transparent; border-bottom: 0; border-top: 5px solid #505050; }
.sb-track { flex: 1; padding: 384px 1px 0 2px; }
.sb-thumb { height: 415px; background: #c1c1c1; }

/* taskbar */
.taskbar {
  flex: 0 0 50px;
  display: flex;
  background: linear-gradient(90deg, #1d1c1b 0%, #262220 20%, #2e2528 45%, #222022 70%, #1f1f20 100%);
  color: #eee;
  font-family: "Noto Sans", sans-serif;
  font-size: 14px;
}
.task-fixed { display: grid; grid-template-columns: 60px 60px 63px; }
.task-apps { display: grid; grid-template-columns: repeat(17, 62px); }
.task { position: relative; display: flex; align-items: center; justify-content: center; height: 50px; }
.task-sys { width: 20px; height: 22px; }
.task-ico { width: 32px; height: 32px; }
.task-active { background: rgba(255, 255, 255, 0.22); }
.task-run::after {
  content: "";
  position: absolute;
  left: 5px;
  right: 6px;
  bottom: 0;
  height: 3px;
  background: #f7b0b0;
}
.task-active::after { left: 0; right: 0; }
.task-stack::after { background: linear-gradient(90deg, #f7b0b0 78%, #c48a8a 78%); }
.tray { margin-left: auto; display: flex; align-items: center; }
.tray-item { width: 30px; height: 50px; display: flex; align-items: center; justify-content: center; }
.tray-ico { width: 16px; height: 16px; }
.tray-ico-lg { width: 20px; height: 18px; }
.tray-lang { width: 45px; text-align: center; line-height: 20px; }
.tray-clock { width: 83px; text-align: center; }
.clock-line { line-height: 23px; }
.tray-notif { width: 52px; height: 50px; position: relative; display: flex; align-items: center; justify-content: center; }
.notif-ico { width: 20px; height: 18px; margin-bottom: 3px; }
.notif-badge {
  position: absolute;
  left: 26px;
  top: 24px;
  width: 22px;
  height: 22px;
  border-radius: 50%;
  border: 1px solid #777;
  background: #2a2a2a;
  font-size: 13px;
  font-weight: 600;
  line-height: 20px;
  text-align: center;
  color: #eee;
}
.tray-show { width: 6px; height: 50px; margin-left: 9px; border-left: 1px solid #555; }

.tile-code { font: 700 12.500px "Liberation Mono", monospace; fill: #fff; }
.tile-letter { font: 700 12px "Liberation Sans", sans-serif; fill: #fff; text-anchor: middle; }
.tile-typora { font: 400 19px "Liberation Serif", serif; fill: #444; text-anchor: middle; }
```
